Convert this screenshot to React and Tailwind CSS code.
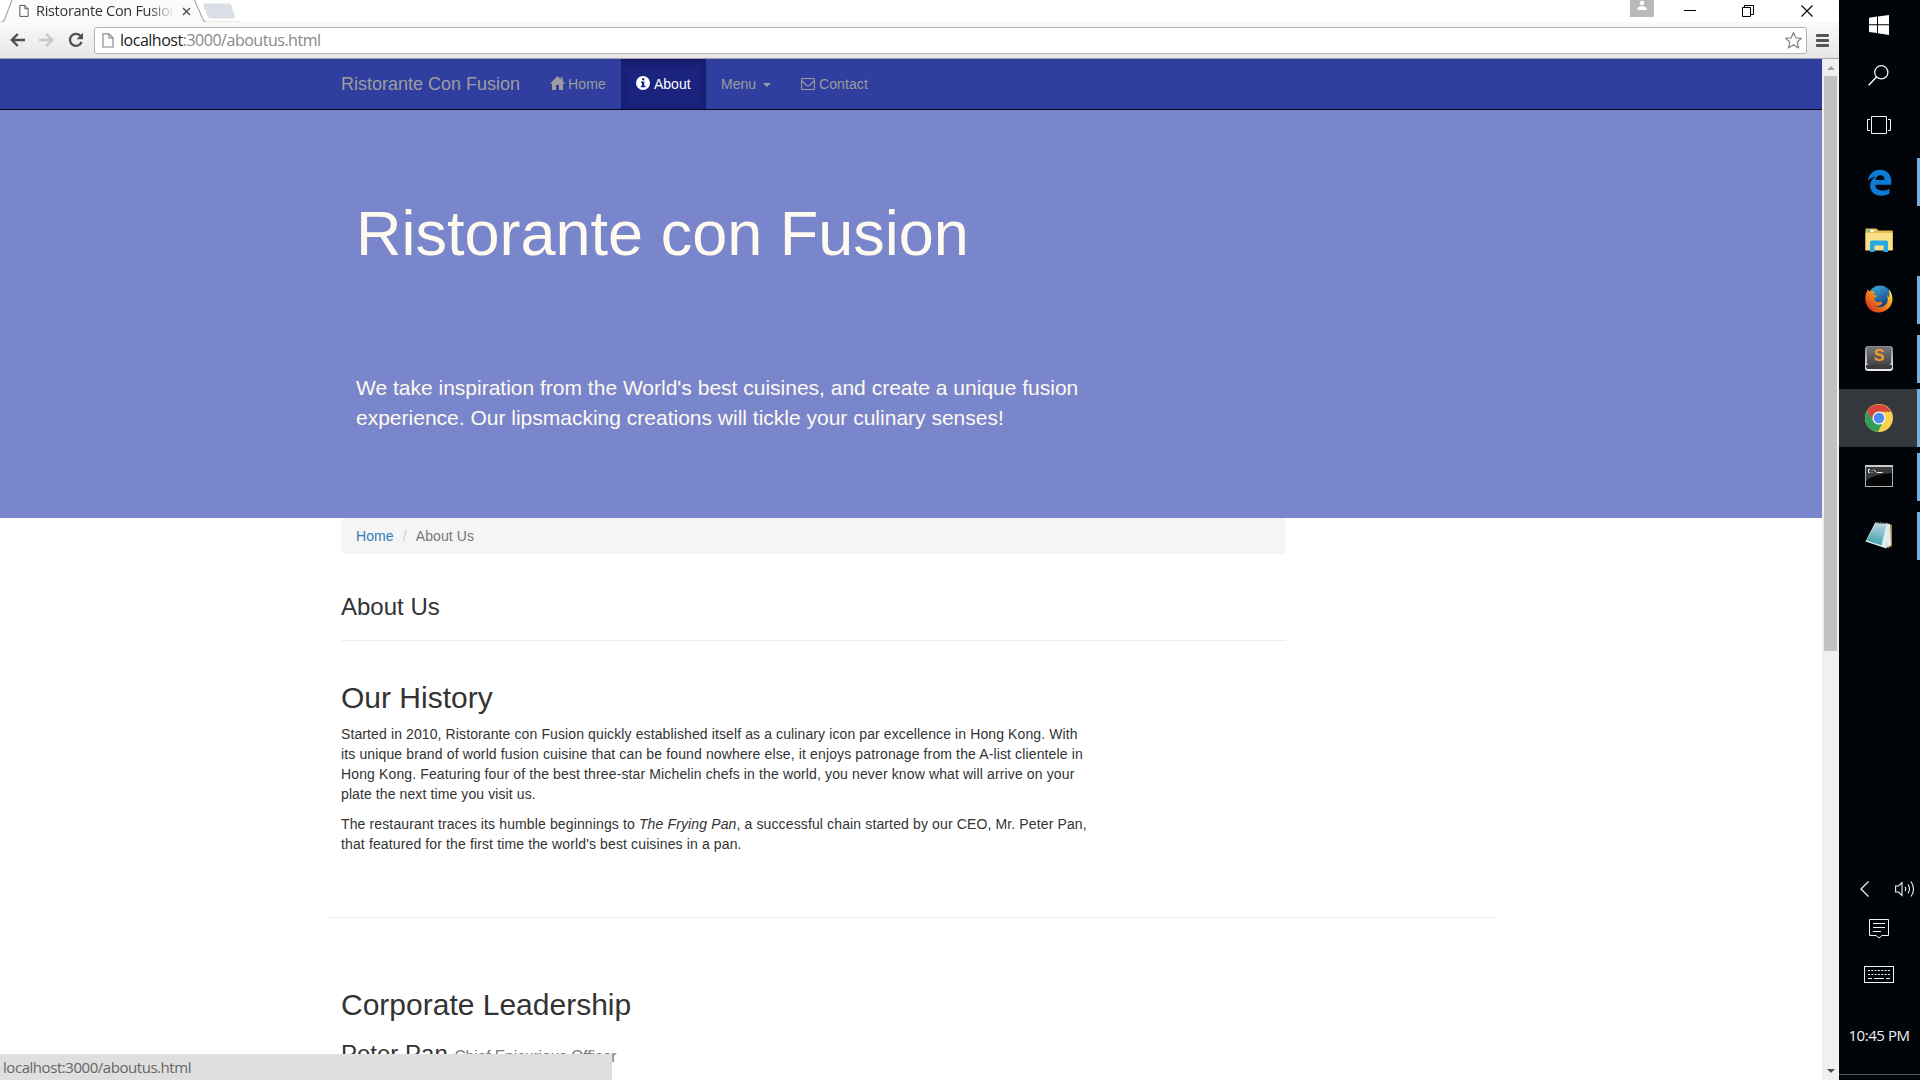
import React from "react";

const segoe = "font-['Open_Sans','Noto_Sans',sans-serif]";

function PageIcon({ className }) {
  return (
    <svg className={className} viewBox="0 0 12 15" fill="none">
      <path d="M1 .8h6l4 4V14H1z" stroke="currentColor" strokeWidth="1.2" fill="#fdfdfd" />
      <path d="M7 .8v4h4" stroke="currentColor" strokeWidth="1.2" />
    </svg>
  );
}

function TabStrip() {
  return (
    <div className="relative h-[22px] w-full bg-white flex items-start">
      <svg className="absolute left-0 top-0" width="240" height="24" viewBox="0 0 240 24">
        <path d="M0 22.5c3 0 3.500-1 4.500-3L12 0H194l8.500 19.500c.8 2 1.500 3 4 3V24H0z" fill="#fbfbfb" />
        <path d="M0 22.500c2.500 0 3.500-1 4.500-3L12 0" fill="none" stroke="#a9a9a9" strokeWidth="1.200" />
        <path d="M194.500 0L203 19.500c.8 2 1.500 2.800 4 2.800H240" fill="none" stroke="#a9a9a9" strokeWidth="1.200" />
        <path d="M205 3.500h23c2 0 2.800.6 3.500 2.200l3.300 10.500c.5 1.700 0 2.300-1.500 2.300h-22c-2 0-3-.6-3.700-2.200L203.500 6c-.6-1.700 0-2.500 1.500-2.500z" fill="#dadee5" />
      </svg>
      <div className="relative flex items-center h-[22px] pl-[19px]">
        <PageIcon className="w-[10px] h-[14px] text-[#555]" />
        <div className={`ml-[7px] w-[138px] overflow-hidden whitespace-nowrap text-[14.500px] leading-[20px] tracking-[-0.3px] text-[#333] [mask-image:linear-gradient(to_right,black_82%,transparent)] ${segoe}`}>
          Ristorante Con Fusion
        </div>
        <svg className="ml-[8px] w-[9px] h-[9px]" viewBox="0 0 9 9">
          <path d="M1 1l7 7M8 1l-7 7" stroke="#555" strokeWidth="1.500" />
        </svg>
      </div>
      <div className="ml-auto flex h-full items-start">
        <div className="w-[24px] h-[17px] bg-[#b9b9b9] flex justify-center">
          <svg width="10" height="10" viewBox="0 0 10 10" fill="#fff">
            <circle cx="5" cy="3" r="2.200" />
            <path d="M.5 10V8.500C1 6.800 3 6.300 5 6.300s4 .5 4.500 2.200V10z" />
          </svg>
        </div>
        <svg className="ml-[30px] mt-[4px]" width="12" height="14" viewBox="0 0 12 14">
          <path d="M0 6.500h12" stroke="#000" />
        </svg>
        <svg className="ml-[46px] mt-[4px]" width="12" height="14" viewBox="0 0 12 14" fill="none" stroke="#000">
          <path d="M.5 3.500h8v9h-8zM2.500 3V1.500h9v9H9" />
        </svg>
        <svg className="ml-[47px] mr-[26px] mt-[4px]" width="12" height="14" viewBox="0 0 12 14">
          <path d="M.5 1.500l11 11M11.500 1.500l-11 11" stroke="#000" strokeWidth="1.100" />
        </svg>
      </div>
    </div>
  );
}

function Toolbar() {
  return (
    <div className="relative h-[37px] w-full flex items-center bg-linear-to-b from-[#fafafa] to-[#e6e6e6] border-b border-[#a4a4a8]">
      <svg className="ml-[10px]" width="15" height="14" viewBox="0 0 15 14" fill="none" stroke="#505050" strokeWidth="2.400">
        <path d="M15 7H2M7.800 1L1.800 7l6 6" />
      </svg>
      <svg className="ml-[14px]" width="15" height="14" viewBox="0 0 15 14" fill="none" stroke="#c6c6c6" strokeWidth="2.400">
        <path d="M0 7h13M7.200 1l6 6-6 6" />
      </svg>
      <svg className="ml-[14px]" width="16" height="16" viewBox="0 0 16 16" fill="none">
        <path d="M12.800 4.200A6 6 0 1 0 13.600 10" stroke="#505050" strokeWidth="2.300" />
        <path d="M15 .8v6.400H8.600z" fill="#505050" />
      </svg>
      <div className="ml-[10px] w-[1713px] h-[27px] rounded-[3px] border border-[#b4b4b4] bg-white flex items-center">
        <PageIcon className="ml-[7px] w-[12px] h-[15px] text-[#8a8a8a]" />
        <div className={`ml-[6px] whitespace-nowrap text-[16px] leading-[20px] tracking-[-0.48px] text-[#888] ${segoe}`}>
          <span className="text-[#222]">localhost</span>:3000/aboutus.html
        </div>
        <svg className="ml-auto mr-[3px]" width="19" height="19" viewBox="0 0 19 19" fill="none">
          <path d="M9.500 1.500l2.300 5.300 5.700.5-4.300 3.800 1.300 5.900-5-3.100-5 3.100 1.300-5.900L1.500 7.300l5.700-.5z" stroke="#8a8a8a" strokeWidth="1.300" strokeLinejoin="round" />
        </svg>
      </div>
      <div className="ml-[9px] flex flex-col gap-[2px]">
        <div className="w-[13px] h-[3px] rounded-[1px] bg-[#555]" />
        <div className="w-[13px] h-[3px] rounded-[1px] bg-[#555]" />
        <div className="w-[13px] h-[3px] rounded-[1px] bg-[#555]" />
      </div>
    </div>
  );
}

function NavBar() {
  return (
    <nav className="h-[51px] bg-[#303f9f] border-b border-[#080815] flex items-stretch pl-[341px] text-[14px] leading-[20px] text-[#9d9d9d] whitespace-nowrap">
      <div className="w-[194px] flex items-center text-[18px]">Ristorante Con Fusion</div>
      <div className="w-[86px] pl-[15px] flex items-center tracking-[0.15px]">
        <svg width="15" height="14" viewBox="0 0 15 14" fill="currentColor" className="mr-[3px] -mt-[2px]">
          <path d="M7.500 0L10.800 3.300V1.200h2v4.100L15 7.700H13V14H9V9H6v5H2V7.700H0z" />
        </svg>
        Home
      </div>
      <div className="w-[85px] pl-[15px] flex items-center bg-[#1a237e] text-white shadow-[inset_0_3px_9px_rgba(0,0,0,0.25)]">
        <svg width="14" height="14" viewBox="0 0 14 14" className="mr-[4px] -mt-[2px]">
          <circle cx="7" cy="7" r="7" fill="#fff" />
          <path d="M6 2.300h2.300v2H6zM5 5.500h3.300v4.200h1.200v1.500H4.800V9.700H6V7H5z" fill="#1a237e" />
        </svg>
        About
      </div>
      <div className="w-[80px] pl-[15px] flex items-center">
        Menu
        <svg width="8" height="4" viewBox="0 0 8 4" fill="currentColor" className="ml-[7px] mt-[2px]">
          <path d="M0 0h8L4 4z" />
        </svg>
      </div>
      <div className="pl-[15px] flex items-center tracking-[0.1px]">
        <svg width="14" height="12" viewBox="0 0 14 12" fill="none" stroke="currentColor" strokeWidth="1.100" className="mr-[4px]">
          <rect x=".55" y=".55" width="12.900" height="10.900" rx="1" />
          <path d="M.8 3l4.700 4.200q1.500 1 3 0L13.200 3" />
        </svg>
        Contact
      </div>
    </nav>
  );
}

function Hero() {
  return (
    <header className="h-[408px] bg-[#7986cb] pl-[356px] whitespace-nowrap">
      <h1 className="pt-[89px] text-[63px] leading-[69px] text-[#fffaf0]">Ristorante con Fusion</h1>
      <div className="pt-[105px] text-[21px] leading-[30px] text-[#fffaf0]">
        <p>We take inspiration from the World's best cuisines, and create a unique fusion</p>
        <p>experience. Our lipsmacking creations will tickle your culinary senses!</p>
      </div>
    </header>
  );
}

function Content() {
  return (
    <main className="pl-[341px] text-[14px] leading-[20px] text-[#333] whitespace-nowrap">
      <div className="w-[945px] h-[36px] rounded-[4px] bg-[#f5f5f5] flex items-center pl-[15px] tracking-[0.1px]">
        <span className="text-[#337ab7]">Home</span>
        <span className="px-[9px] text-[#ccc]">/</span>
        <span className="text-[#777]">About Us</span>
      </div>
      <h3 className="w-[945px] mt-[40px] h-[47px] border-b border-[#eee] text-[24px] leading-[26px]">About Us</h3>
      <h2 className="mt-[40px] text-[30px] leading-[33px]">Our History</h2>
      <div className="mt-[10px]">
        <p className="tracking-[0.11px]">Started in 2010, Ristorante con Fusion quickly established itself as a culinary icon par excellence in Hong Kong. With</p>
        <p className="tracking-[0.13px]">its unique brand of world fusion cuisine that can be found nowhere else, it enjoys patronage from the A-list clientele in</p>
        <p className="tracking-[0.13px]">Hong Kong. Featuring four of the best three-star Michelin chefs in the world, you never know what will arrive on your</p>
        <p className="tracking-[0.1px]">plate the next time you visit us.</p>
      </div>
      <div className="mt-[10px] tracking-[0.13px]">
        <p>The restaurant traces its humble beginnings to <em>The Frying Pan</em>, a successful chain started by our CEO, Mr. Peter Pan,</p>
        <p>that featured for the first time the world's best cuisines in a pan.</p>
      </div>
      <div className="-ml-[15px] mt-[63px] w-[1170px] h-px bg-[#eee]" />
      <h2 className="mt-[70px] text-[30px] leading-[33px]">Corporate Leadership</h2>
      <h3 className="mt-[20px] text-[24px] leading-[26px]">
        Peter Pan <small className="text-[15.600px] tracking-[-0.06px] text-[#777]">Chief Epicurious Officer</small>
      </h3>
    </main>
  );
}

function ScrollBar() {
  return (
    <div className="w-[17px] h-full bg-[#f0f0f0] flex flex-col items-center">
      <svg className="mt-[7px] mb-[6px] shrink-0" width="8" height="4" viewBox="0 0 8 4" fill="#a0a0a0"><path d="M0 4l4-4 4 4z" /></svg>
      <div className="w-[13px] h-[575px] bg-[#c1c1c1]" />
      <svg className="mt-auto mb-[7px] shrink-0" width="8" height="4" viewBox="0 0 8 4" fill="#505050"><path d="M0 0h8L4 4z" /></svg>
    </div>
  );
}

function EdgeIcon() {
  return (
    <svg width="25" height="27" viewBox="0 0 26 28">
      <path d="M.8 12.500C2.200 4.500 7.500.8 13.300.8c7.400 0 12 5 12 12.200v3.400H8.600c.3 4.300 3.500 6 7.500 6 2.800 0 5-.7 7.200-2v5.400c-2.500 1.400-5.500 2-8.600 2C8 27.800 3.300 23.800 3.300 17.500c0-4.500 2.500-8 6.200-9.700C5.800 8.300 3 10 .8 12.500zM8.800 11.500h9.400c0-3-1.300-5-4.300-5-2.800 0-4.600 2.200-5.100 5z" fill="#0c7cd5" />
    </svg>
  );
}

function FolderIcon() {
  return (
    <svg width="28" height="24" viewBox="0 0 28 24">
      <path d="M.5 1.500q0-1 1-1h10l2 2h13.500q.8 0 .8.800V22H.5z" fill="#e8bd50" />
      <path d="M.5 5h27v17.500H.5z" fill="#fbe08a" />
      <path d="M3 1.800h6v2H3z" fill="#fff" />
      <path d="M3 1.800h2v2H3z" fill="#3fb3a0" />
      <path d="M5 14q0-1.500 1.500-1.500h15q1.500 0 1.500 1.500v10h-4.500v-6.500h-9V24H5z" fill="#29abe2" />
    </svg>
  );
}

function FirefoxIcon() {
  return (
    <svg width="28" height="28" viewBox="0 0 28 28">
      <defs>
        <linearGradient id="ffFox" x1="1" y1=".1" x2="0.150" y2=".9">
          <stop offset="0" stopColor="#ffe75a" />
          <stop offset=".4" stopColor="#fb9a1c" />
          <stop offset="1" stopColor="#d8361a" />
        </linearGradient>
        <linearGradient id="ffGlobe" x1="0" y1="0" x2="0.500" y2="1">
          <stop offset="0" stopColor="#3fb6e8" />
          <stop offset="1" stopColor="#163a7c" />
        </linearGradient>
      </defs>
      <circle cx="15" cy="12" r="11.600" fill="url(#ffGlobe)" />
      <path d="M24 4.500c5 6 4.600 14.500-.8 19.200-5.600 5-14.300 5-19.200-.3C-.2 19-.8 11 2 6.500l.6-2.300 2 2.200c2-.6 4-.2 5.400.9-1 .8-1.600 1.600-1.500 2.700l3.500.5c-.2 1.500-1.500 2-2.800 2.700-.2 2.800 2.200 4.600 4.800 3.700 1.700-.7 3 .1 3.300 1-2 3-5.300 3.800-8.300 2.700 5 3.300 11.500 1.400 13.300-3.600.9-2.500.6-5-.4-7l2.300 2.300c.4-3-.1-5.400-.2-7.800z" fill="url(#ffFox)" />
    </svg>
  );
}

function SublimeIcon() {
  return (
    <div className="w-[28px] h-[25px] rounded-[3px] bg-linear-to-b from-[#888] to-[#f0f0f0] px-px pt-px pb-[2px] flex flex-col">
      <div className="h-[18px] mx-px rounded-[2px] bg-linear-to-b from-[#777] to-[#444] text-[#f59a32] text-[16px] leading-[18px] font-bold text-center">S</div>
      <div className="grow bg-[#3c3c3c] rounded-b-[2px]" />
    </div>
  );
}

function ChromeIcon() {
  return (
    <svg width="28" height="28" viewBox="0 0 28 28">
      <circle cx="14" cy="14" r="14" fill="#fbd04b" />
      <path d="M14 14L8.300 17.300 1.900 7A14 14 0 0 1 26.100 7.800H14z" fill="#d9453a" />
      <path d="M1.900 7l6.500 10.200L14 20.300l3-.2-4.200 7.850A14 14 0 0 1 1.900 7z" fill="#2e9e58" />
      <circle cx="14" cy="14" r="6.600" fill="#f4f4f4" />
      <circle cx="14" cy="14" r="5.300" fill="#4a8af4" />
    </svg>
  );
}

function TerminalIcon() {
  return (
    <svg width="28" height="22" viewBox="0 0 28 22">
      <rect x=".5" y=".5" width="27" height="21" fill="#050505" stroke="#a9b1b3" />
      <path d="M1 1h26v7Q8 9 1 16z" fill="#3a3a3a" />
      <path d="M0 0h28v2H0z" fill="#c3cbcc" />
      <path d="M5 4.500H3.500v3H5M7 5v.8M7 7v.8M9 4.500l2 3M12 7.500h5.500" stroke="#eee" fill="none" />
    </svg>
  );
}

function NotepadIcon() {
  return (
    <svg width="28" height="28" viewBox="0 0 28 28">
      <defs>
        <linearGradient id="npPage" x1="0.600" y1="0" x2="0.400" y2="1">
          <stop offset="0" stopColor="#b5d3d9" />
          <stop offset="1" stopColor="#3c9fb0" />
        </linearGradient>
      </defs>
      <path d="M24 3l3 1v21l-4 2z" fill="#a8824e" />
      <path d="M20 2l5 1 1 21-4.500 3z" fill="#e4e9e9" />
      <path d="M10 2l12.500 1L21.500 27.500.5 20.500z" fill="#dceef0" />
      <path d="M10.500 3l11 .8-5 20.500L1.500 19.500z" fill="url(#npPage)" />
      <path d="M10 1.600l13 1" stroke="#888" strokeDasharray="1.500 1" strokeWidth="1.500" />
    </svg>
  );
}

function Tile({ children, open = true, active = false, raised = false }) {
  return (
    <div className={`relative w-full h-[58px] mb-px flex items-center justify-center pr-px ${active ? "bg-[#34383d]" : ""} ${raised ? "pb-[2px]" : ""}`}>
      {children}
      {open && <div className={`absolute right-0 w-[3px] bg-[#76b0e0] ${active ? "top-0 h-[58px]" : "top-[5px] h-[48px]"}`} />}
    </div>
  );
}

function TaskBar() {
  return (
    <aside className="w-[81px] h-full bg-[#010409] flex flex-col items-center">
      <div className="h-[50px] pr-px flex items-center">
        <svg width="20" height="20" viewBox="0 0 20 20" fill="#fff">
          <path d="M0 2.700L8 1.600v7.700H0zM9 1.500L20 0v9.300H9zM0 10.300h8V18L0 17zM9 10.300h11V20L9 18.300z" />
        </svg>
      </div>
      <div className="h-[50px] pr-[2px] flex items-center">
        <svg width="21" height="21" viewBox="0 0 21 21" fill="none" stroke="#f4f4f4" strokeWidth="1.300">
          <circle cx="13.300" cy="7.300" r="6.600" />
          <path d="M8.500 12L.7 20.200" strokeWidth="1.600" />
        </svg>
      </div>
      <div className="h-[53px] pb-[3px] pr-px flex items-center">
        <svg width="24" height="18" viewBox="0 0 24 18" fill="none" stroke="#f4f4f4">
          <path d="M4.500.500h15v17h-15zM3 3.500H.5v11H3M21 3.500h2.500v11H21" />
        </svg>
      </div>
      <Tile><EdgeIcon /></Tile>
      <Tile open={false} raised><FolderIcon /></Tile>
      <Tile raised><FirefoxIcon /></Tile>
      <Tile raised><SublimeIcon /></Tile>
      <Tile active><ChromeIcon /></Tile>
      <Tile raised><TerminalIcon /></Tile>
      <Tile raised><NotepadIcon /></Tile>
      <div className="mt-auto w-full flex items-center pl-[21px] h-[18px]">
        <svg width="9" height="16" viewBox="0 0 9 16" fill="none" stroke="#f0f0f0" strokeWidth="1.300"><path d="M8.500.500L1 8l7.500 7.500" /></svg>
        <svg className="ml-[26px]" width="21" height="18" viewBox="0 0 21 18" fill="none" stroke="#f0f0f0" strokeWidth="1.100">
          <path d="M.6 6h3L7 2.500v13L3.600 12h-3zM10 6.800q1.500 2.200 0 4.400M13 4.500q3 4.500 0 9M16 1.500q5 7.500 0 15" />
        </svg>
      </div>
      <svg className="mt-[21px] mr-px shrink-0" width="20" height="20" viewBox="0 0 20 20" fill="none" stroke="#f4f4f4">
        <path d="M.5.500h19v16H13L10 19l-3-2.500H.5zM4 4.500h12M4 8.500h12M4 12.500h8" />
      </svg>
      <svg className="mt-[27px] mr-px shrink-0" width="30" height="17" viewBox="0 0 30 17" fill="none" stroke="#f4f4f4">
        <rect x=".5" y=".5" width="29" height="16" />
        <path d="M4 4.500h22M4 8.500h22" strokeDasharray="2 1.300" />
        <path d="M4 12.500h4M10 12.500h10M22 12.500h4" />
      </svg>
      <div className={`mt-[42px] mr-px h-[20px] text-[15px] leading-[20px] tracking-[-0.45px] whitespace-nowrap text-[#f0f0f0] ${segoe}`}>10:45 PM</div>
      <div className="mt-[29px] mb-[5px] w-full h-px shrink-0 bg-[#55595e]" />
    </aside>
  );
}

export default function App() {
  return (
    <div className="w-[1920px] h-[1080px] overflow-hidden flex bg-white font-['Liberation_Sans',Arial,sans-serif]">
      <div className="relative w-[1839px] h-full flex flex-col">
        <TabStrip />
        <Toolbar />
        <div className="h-[1021px] flex">
          <div className="w-[1822px] h-full overflow-hidden">
            <NavBar />
            <Hero />
            <Content />
          </div>
          <ScrollBar />
        </div>
        <div className={`absolute left-0 bottom-0 w-[612px] h-[26px] bg-[#dfdfdf] pl-[3px] text-[15px] leading-[26px] tracking-[-0.45px] whitespace-nowrap text-[#666] ${segoe}`}>
          localhost:3000/aboutus.html
        </div>
      </div>
      <TaskBar />
    </div>
  );
}
